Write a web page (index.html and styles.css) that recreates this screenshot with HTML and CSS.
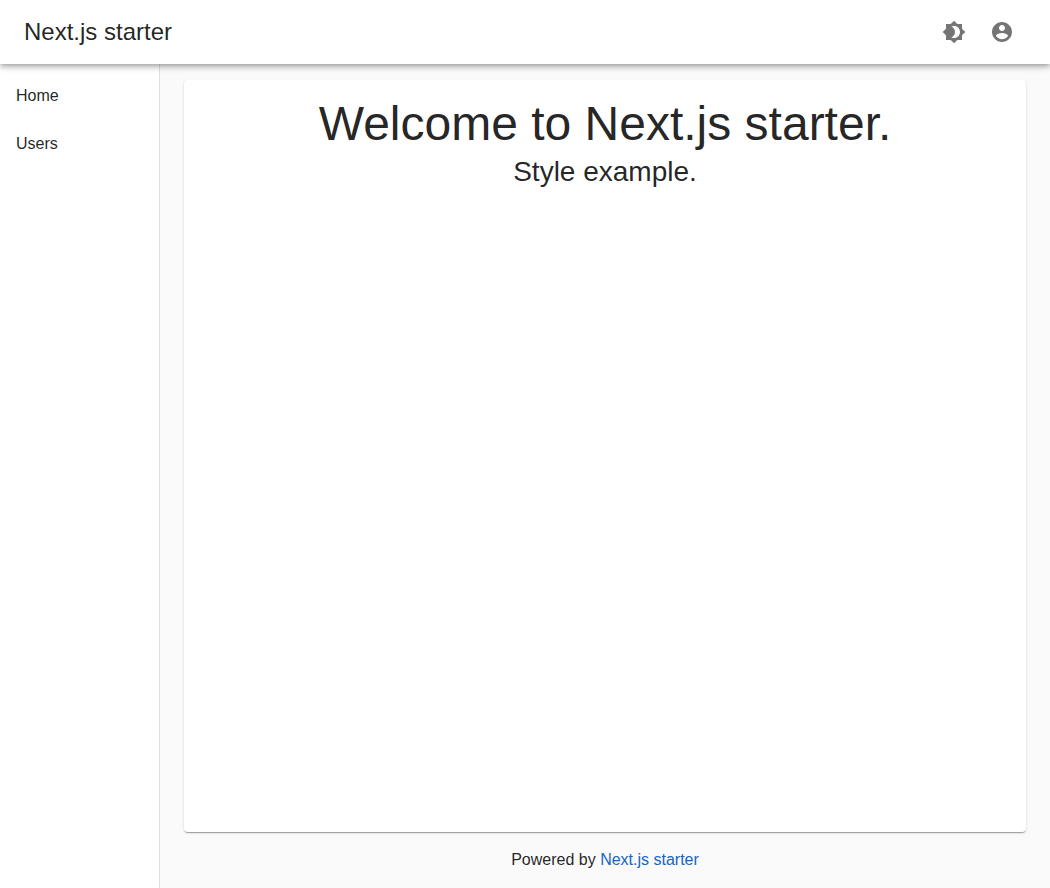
FILE: index.html
```html
<!DOCTYPE html>
<html lang="en">
<head>
<meta charset="utf-8">
<meta name="viewport" content="width=device-width, initial-scale=1">
<title>Next.js starter</title>
<link rel="stylesheet" href="styles.css">
</head>
<body>
<div class="app">
  <header class="app-bar">
    <div class="brand">Next.js starter</div>
    <div class="actions">
      <button class="icon-button" type="button" aria-label="Toggle theme">
        <svg class="icon" viewBox="0 0 24 24" aria-hidden="true"><path d="M20 8.690V4h-4.690L12 .69 8.690 4H4v4.690L.69 12 4 15.310V20h4.690L12 23.310 15.310 20H20v-4.690L23.310 12 20 8.690zM12 18c-.89 0-1.740-.2-2.500-.55C11.560 16.500 13 14.420 13 12s-1.440-4.500-3.500-5.450C10.260 6.200 11.110 6 12 6c3.310 0 6 2.690 6 6s-2.690 6-6 6z"/></svg>
      </button>
      <button class="icon-button" type="button" aria-label="Account">
        <svg class="icon" viewBox="0 0 24 24" aria-hidden="true"><path d="M12 2C6.480 2 2 6.480 2 12s4.480 10 10 10 10-4.480 10-10S17.520 2 12 2zm0 3c1.660 0 3 1.340 3 3s-1.340 3-3 3-3-1.340-3-3 1.340-3 3-3zm0 14.200c-2.500 0-4.710-1.280-6-3.220.030-1.990 4-3.080 6-3.080 1.990 0 5.970 1.090 6 3.080-1.290 1.940-3.500 3.220-6 3.220z"/></svg>
      </button>
    </div>
  </header>
  <div class="body">
    <nav class="sidebar" aria-label="Main">
      <a class="nav-link" href="#home">Home</a>
      <a class="nav-link" href="#users">Users</a>
    </nav>
    <div class="content">
      <main class="paper">
        <h1 class="title">Welcome to Next.js starter.</h1>
        <p class="subtitle">Style example.</p>
      </main>
      <footer class="footer">Powered by <a class="footer-link" href="#starter">Next.js starter</a></footer>
    </div>
  </div>
</div>
</body>
</html>
```

FILE: styles.css
```css
* {
  box-sizing: border-box;
}

body {
  margin: 0;
  color: rgba(0, 0, 0, 0.87);
  background: #fafafa;
  font: 16px/24px "Liberation Sans", Arial, sans-serif;
}

.app {
  display: flex;
  flex-direction: column;
  min-height: 100vh;
}

.app-bar {
  position: relative;
  z-index: 1;
  display: flex;
  align-items: center;
  justify-content: space-between;
  padding: 8px 24px;
  background: #fff;
  box-shadow: 0 2px 4px -1px rgba(0, 0, 0, 0.2), 0 4px 5px 0 rgba(0, 0, 0, 0.14), 0 1px 10px 0 rgba(0, 0, 0, 0.12);
}

.brand {
  font-size: 24px;
  line-height: 32px;
}

.actions {
  display: flex;
}

.icon-button {
  display: flex;
  padding: 12px;
  border: 0;
  border-radius: 50%;
  color: rgba(0, 0, 0, 0.54);
  background: transparent;
  cursor: pointer;
}

.icon {
  width: 24px;
  height: 24px;
  fill: currentColor;
}

.body {
  display: flex;
  flex: 1;
}

.sidebar {
  flex: none;
  width: 160px;
  padding: 8px 0;
  border-right: 1px solid rgba(0, 0, 0, 0.12);
  background: #fff;
}

.nav-link {
  display: block;
  padding: 12px 16px;
  color: inherit;
  text-decoration: none;
}

.content {
  display: flex;
  flex: 1;
  flex-direction: column;
  padding: 16px 24px;
}

.paper {
  flex: 1;
  padding: 16px;
  border-radius: 4px;
  background: #fff;
  box-shadow: 0 2px 1px -1px rgba(0, 0, 0, 0.2), 0 1px 1px 0 rgba(0, 0, 0, 0.14), 0 1px 3px 0 rgba(0, 0, 0, 0.12);
  text-align: center;
}

.title {
  margin: 0;
  font-size: 48px;
  font-weight: 400;
  line-height: 56px;
}

.subtitle {
  margin: 0;
  font-size: 28px;
  line-height: 40px;
}

.footer {
  padding-top: 16px;
  text-align: center;
}

.footer-link {
  color: #1565c0;
  text-decoration: none;
}
```
